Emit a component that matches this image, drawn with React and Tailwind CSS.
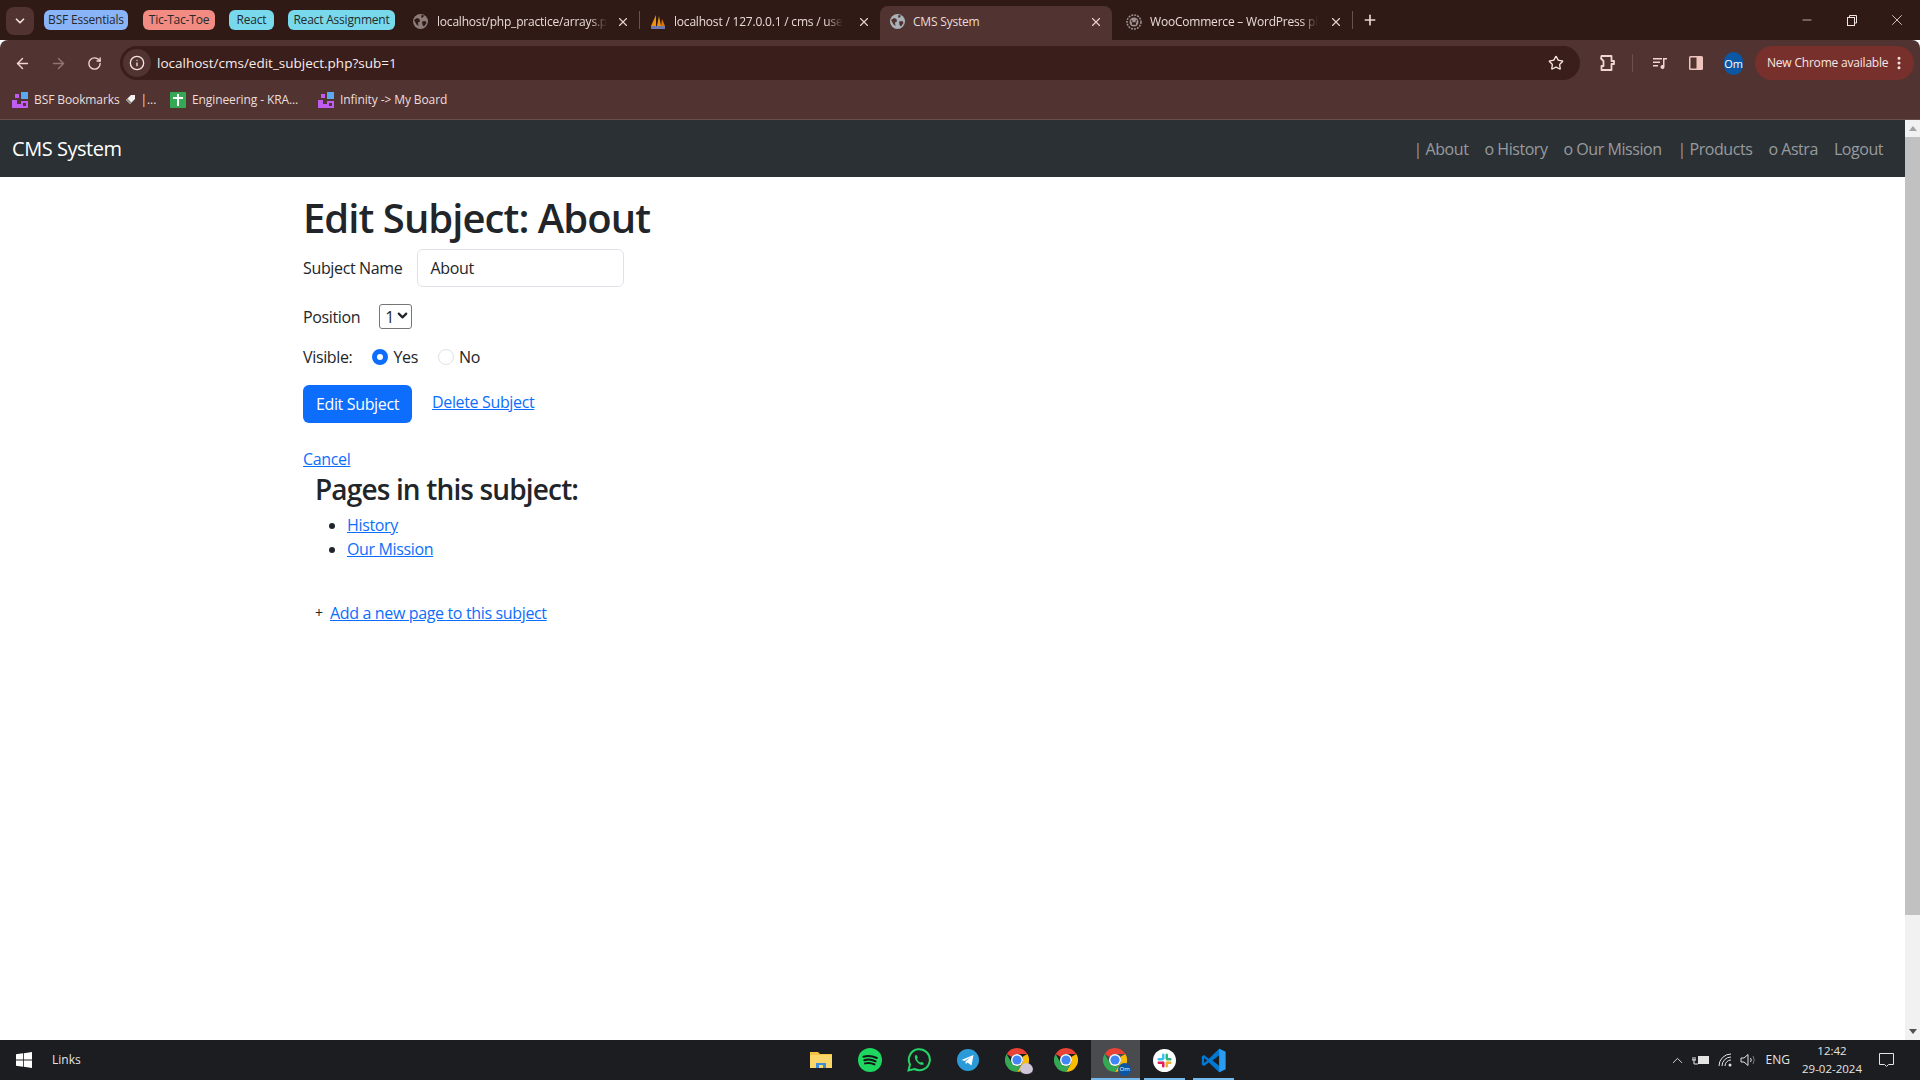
import { ArrowLeft, ArrowRight, RotateCw, Info, Star, ChevronDown, ChevronUp, X, Plus, Minus, MoreVertical } from "lucide-react";

const PILLS = [
  { label: "BSF Essentials", cls: "w-[84px] bg-[#8ab4f8] mr-[15px]" },
  { label: "Tic-Tac-Toe", cls: "w-[72px] bg-[#f28b82] mr-[14px]" },
  { label: "React", cls: "w-[45px] bg-[#78d9ec] mr-[14px]" },
  { label: "React Assignment", cls: "w-[107px] bg-[#78d9ec]" },
];

const NAV_LINKS = ["| About", "o History", "o Our Mission", "| Products", "o Astra", "Logout"];

function BoardIcon() {
  return (
    <svg width="16" height="16" viewBox="0 0 16 16" className="shrink-0">
      <rect x="0" y="8" width="5" height="8" fill="#c05cf2" />
      <rect x="5" y="12" width="4" height="4" fill="#c05cf2" />
      <rect x="3" y="2" width="4" height="4" fill="#c05cf2" />
      <rect x="9" y="0" width="7" height="7" fill="#5aa8f0" />
      <rect x="9" y="9" width="7" height="7" fill="#c05cf2" />
      <rect x="11" y="11" width="3" height="3" fill="#513432" />
    </svg>
  );
}

function SheetIcon() {
  return (
    <svg width="16" height="16" viewBox="0 0 16 16" className="shrink-0">
      <rect width="16" height="16" rx="1" fill="#34a853" />
      <rect x="3" y="5" width="10" height="2" fill="#fff" />
      <rect x="7" y="2" width="2" height="12" fill="#fff" />
    </svg>
  );
}

function PmaIcon() {
  return (
    <svg width="16" height="16" viewBox="0 0 16 16" className="shrink-0">
      <path d="M1 12 L6 1 L6 12 Z" fill="#f29111" />
      <path d="M7 12 L9 2 L11 12 Z" fill="#f29111" />
      <path d="M11 12 L12 5 L15 12 Z" fill="#d97a0a" />
      <rect x="1" y="12" width="14" height="3" fill="#6c78af" />
    </svg>
  );
}

function WpIcon() {
  return (
    <svg width="16" height="16" viewBox="0 0 16 16" className="shrink-0">
      <circle cx="8" cy="8" r="7" fill="none" stroke="#9c8f8d" strokeWidth="1.5" strokeDasharray="2 1" />
      <circle cx="8" cy="8" r="4.5" fill="#9c8f8d" />
      <path d="M5.5 6 L7 11 L8 8 L9 11 L10.5 6" fill="none" stroke="#301a16" strokeWidth="1" />
    </svg>
  );
}

// chrome's default favicon, a filled globe
function GlobeIcon({ color, bg }) {
  return (
    <svg width="15" height="15" viewBox="0 0 15 15" className="shrink-0">
      <circle cx="7.5" cy="7.5" r="7.5" fill={color} />
      <path d="M1 6 L4 4 L6.5 5 L7 7.5 L5 8.5 L5.5 12 L3.5 10.5 Z M8.5 1 L11 1.5 L10 3.5 L8 3.5 Z M9 7.5 L12.5 7 L13.5 9 L11 12.5 L9.5 11 Z" fill={bg} />
    </svg>
  );
}

function ChromeIcon({ badge }) {
  return (
    <div className="relative w-6 h-6">
      <svg width="24" height="24" viewBox="0 0 24 24">
        <path d="M12 0 A12 12 0 0 1 22.4 6 L12 6 A6 6 0 0 0 6.8 9 L1.6 6 A12 12 0 0 1 12 0 Z" fill="#ea4335" />
        <path d="M22.4 6 A12 12 0 0 1 12 24 L17.2 15 A6 6 0 0 0 17.2 9 Z" fill="#fbbc04" />
        <path d="M1.6 6 A12 12 0 0 0 12 24 L17.2 15 A6 6 0 0 1 6.8 15 Z" fill="#34a853" />
        <circle cx="12" cy="12" r="6" fill="#fff" />
        <circle cx="12" cy="12" r="4.6" fill="#4285f4" />
      </svg>
      {badge === "om" && (
        <span className="absolute -right-1 -bottom-1 w-[13px] h-[13px] rounded-full bg-[#0b57a4] text-white text-[6px] leading-[13px] text-center">Om</span>
      )}
      {badge === "pic" && (
        <span className="absolute -right-1 -bottom-1 w-[13px] h-[13px] rounded-full bg-[#cfc4d8] border-b-2 border-[#222]"></span>
      )}
    </div>
  );
}

function TabDivider() {
  return <span className="w-px h-[18px] bg-[#6b504d] shrink-0"></span>;
}

function Tab({ icon, title, active, widthCls, iconCls, textCls }) {
  return (
    <div className={`flex items-center shrink-0 h-[34px] pb-[3px] self-end ${widthCls} ${active ? "bg-[#513432] rounded-t-lg" : ""}`}>
      <span className={`w-4 flex justify-center ${iconCls}`}>{icon}</span>
      <span className={`whitespace-nowrap text-xs tracking-[-0.2px] text-[#e9dbd9] ${textCls}`}>{title}</span>
      <X size={14} strokeWidth={2} className="ml-auto mr-[9px] text-[#e9cfcb]" />
    </div>
  );
}

function TabStrip() {
  return (
    <div className="flex items-center h-10 bg-[#301a16] pl-[6px] shrink-0">
      <div className="w-7 h-[28px] rounded-lg bg-[#513432] flex items-center justify-center mr-[10px] mt-[2px]">
        <ChevronDown size={14} strokeWidth={3} className="text-[#f0dedb]" />
      </div>
      {PILLS.map((p) => (
        <span key={p.label} className={`h-5 rounded-md flex items-center justify-center text-xs tracking-[-0.2px] text-[#26292b] ${p.cls}`}>{p.label}</span>
      ))}
      <span className="ml-[7px]"><TabDivider /></span>
      <Tab widthCls="w-[237px]" iconCls="ml-[10px] mr-[9px]" textCls="[mask-image:linear-gradient(to_right,black_90%,transparent)]" title="localhost/php_practice/arrays.p" icon={<GlobeIcon color="#8d7c7a" bg="#301a16" />} />
      <TabDivider />
      <Tab widthCls="w-[240px]" iconCls="ml-[10px] mr-[8px]" textCls="[mask-image:linear-gradient(to_right,black_90%,transparent)]" title="localhost / 127.0.0.1 / cms / use" icon={<PmaIcon />} />
      <Tab active widthCls="w-[232px]" iconCls="ml-[9px] mr-[8px]" title="CMS System" icon={<GlobeIcon color="#aab1b8" bg="#513432" />} />
      <Tab widthCls="w-[240px]" iconCls="ml-[14px] mr-[8px]" textCls="[mask-image:linear-gradient(to_right,black_90%,transparent)]" title="WooCommerce – WordPress pl" icon={<WpIcon />} />
      <TabDivider />
      <Plus size={16} strokeWidth={2.5} className="ml-[9px] text-[#f0d5d0]" />
      <div className="ml-auto flex items-center text-[#f2e4e2]">
        <Minus size={14} strokeWidth={1.2} className="mr-[32px]" />
        <svg width="12" height="12" viewBox="0 0 12 12" className="mr-[30px]" fill="none" stroke="currentColor">
          <rect x="1.5" y="3.5" width="7" height="8" />
          <path d="M3.5 3.5 V1.5 H10.5 V9 H8.5" />
        </svg>
        <X size={18} strokeWidth={1.1} className="mr-[14px]" />
      </div>
    </div>
  );
}

function Toolbar() {
  return (
    <div className="flex items-center h-[46px] bg-[#513432] rounded-t-lg shrink-0 pl-[14px] pr-[6px] text-[#f0d5d0]">
      <ArrowLeft size={17} strokeWidth={2} className="mr-[19px]" />
      <ArrowRight size={17} strokeWidth={2} className="mr-[20px] text-[#94746f]" />
      <RotateCw size={15} strokeWidth={2.2} className="mr-[18px]" />
      <div className="flex items-center flex-1 h-[34px] rounded-full bg-[#3a1e1b]">
        <span className="ml-[3px] w-7 h-7 rounded-full bg-[#513432] flex items-center justify-center">
          <Info size={16} strokeWidth={2} className="text-[#f5e3e0]" />
        </span>
        <span className="ml-[6px] text-[13.5px] text-[#f8ecea]">localhost/cms/edit_subject.php?sub=1</span>
        <Star size={16} strokeWidth={2} className="ml-auto mr-4 text-[#f5e3e0]" />
      </div>
      <svg width="18" height="18" viewBox="0 0 18 18" className="ml-[18px]" fill="none" stroke="currentColor" strokeWidth="1.8" strokeLinejoin="round">
        <path d="M3.5 2 H13.5 V7 H16 V10 H13.5 V16 H3.5 V12 H5.5 V7 L3 4.5 Z" />
      </svg>
      <span className="w-px h-[18px] bg-[#6e4f4c] ml-[16px]"></span>
      <svg width="16" height="16" viewBox="0 0 16 16" className="ml-[19px]" fill="currentColor">
        <rect x="1" y="3" width="9" height="1.5" />
        <rect x="1" y="6.5" width="7" height="1.5" />
        <rect x="1" y="10" width="5" height="1.5" />
        <path d="M11 3 H15 V4.5 H12.5 V12 A2 2 0 1 1 11 10 Z" />
      </svg>
      <svg width="16" height="16" viewBox="0 0 16 16" className="ml-[20px]">
        <rect x="1" y="1" width="14" height="14" rx="1.5" fill="#eec4bd" />
        <rect x="2.5" y="2.5" width="6" height="11" fill="#513432" />
      </svg>
      <span className="ml-[20px] w-[19px] h-[23px] rounded-full bg-[#0b57a4] text-white text-[11px] leading-[23px] text-center">Om</span>
      <div className="ml-[12px] w-[159px] h-[34px] rounded-full bg-[#77302b] flex items-center pl-3 text-xs tracking-[-0.2px] whitespace-nowrap text-[#f8e6e3]">
        New Chrome available
        <MoreVertical size={16} strokeWidth={2.5} className="ml-auto mr-[7px]" />
      </div>
    </div>
  );
}

function Bookmark({ icon, cls, children }) {
  return (
    <div className={`flex items-center text-xs tracking-[-0.1px] text-[#ecdedc] ${cls}`}>
      <span className="mr-[6px]">{icon}</span>
      {children}
    </div>
  );
}

function BookmarksBar() {
  return (
    <div className="flex items-center h-[34px] pb-[6px] bg-[#513432] border-b border-[#665048] pl-3 shrink-0">
      <Bookmark icon={<BoardIcon />} cls="w-[158px]">
        <span>BSF Bookmarks</span>
        <svg width="11" height="11" viewBox="0 0 11 11" className="mx-[5px]">
          <path d="M1 6 L6 1 L10 1 L10 5 L5 10 Z" fill="#f4f0ef" />
          <path d="M1 6 L5 10 L6.5 8.5 L2.5 4.5 Z" fill="#8a8a8a" />
        </svg>
        <span>|...</span>
      </Bookmark>
      <Bookmark icon={<SheetIcon />} cls="w-[148px]"><span>Engineering - KRA...</span></Bookmark>
      <Bookmark icon={<BoardIcon />}><span>Infinity -&gt; My Board</span></Bookmark>
    </div>
  );
}

function Navbar() {
  return (
    <nav className="flex items-center h-[57px] pt-[1px] bg-[#2b3035] pl-3 pr-[22px] shrink-0">
      <span className="text-xl tracking-[-0.45px] text-white">CMS System</span>
      <div className="ml-auto flex gap-4 text-base tracking-[-0.45px] text-[#989b9e]">
        {NAV_LINKS.map((l) => (
          <span key={l}>{l}</span>
        ))}
      </div>
    </nav>
  );
}

function EditForm() {
  return (
    <div className="ml-[291px] w-[1320px] px-3 text-base tracking-[-0.35px] text-[#212529]">
      <h1 className="mt-[17px] text-[40px] leading-[48px] font-semibold tracking-[-0.95px]">Edit Subject: About</h1>
      <div className="mt-[7px] flex items-center">
        <label>Subject Name</label>
        <div className="ml-[15px] w-[207px] h-[38px] border border-[#dee2e6] rounded-md flex items-center px-3">About</div>
      </div>
      <div className="mt-[17px] flex items-center h-[25px]">
        <label>Position</label>
        <div className="relative ml-[19px]">
          <select defaultValue="1" className="appearance-none block w-[33px] h-[25px] pl-[5px] border border-[#767676] rounded-[3px] bg-white">
            <option value="1">1</option>
          </select>
          <ChevronDown size={15} strokeWidth={3.5} className="absolute right-[2px] top-[4px] pointer-events-none text-[#212529]" />
        </div>
      </div>
      <div className="mt-[16px] flex items-center h-6">
        <span>Visible:</span>
        <span className="ml-[20px] w-4 h-4 rounded-full border-[5px] border-[#0d6efd] bg-white"></span>
        <span className="ml-[5px]">Yes</span>
        <span className="ml-[20px] w-4 h-4 rounded-full border border-[#dee2e6] bg-white"></span>
        <span className="ml-[5px]">No</span>
      </div>
      <div className="mt-[16px] flex items-start">
        <button className="w-[109px] h-[38px] rounded-md bg-[#0d6efd] text-white">Edit Subject</button>
        <a className="ml-5 mt-[5px] text-[#0d6efd] underline" href="#delete">Delete Subject</a>
      </div>
      <div className="mt-[24px]">
        <a className="text-[#0d6efd] underline" href="#cancel">Cancel</a>
      </div>
      <div className="pl-3">
        <h3 className="mt-[1px] text-[28px] leading-[34px] font-semibold tracking-[-0.85px]">Pages in this subject:</h3>
        <ul className="mt-[7px] pl-8 list-disc">
          <li><a className="text-[#0d6efd] underline" href="#history">History</a></li>
          <li><a className="text-[#0d6efd] underline" href="#mission">Our Mission</a></li>
        </ul>
        <div className="mt-[40px] flex">
          <span className="w-[15px] text-sm leading-6">+</span>
          <a className="text-[#0d6efd] underline" href="#add">Add a new page to this subject</a>
        </div>
      </div>
    </div>
  );
}

function Scrollbar() {
  return (
    <div className="w-[15px] bg-[#f1f1f1] flex flex-col shrink-0">
      <div className="h-[17px] flex items-center justify-center">
        <span className="border-x-4 border-x-transparent border-b-[5px] border-b-[#a3a3a3]"></span>
      </div>
      <div className="h-[778px] bg-[#c1c1c1]"></div>
      <div className="mt-auto h-[17px] flex items-center justify-center">
        <span className="border-x-4 border-x-transparent border-t-[5px] border-t-[#505050]"></span>
      </div>
    </div>
  );
}

function Tray({ children, active, underline }) {
  return (
    <div className={`relative w-[49px] h-10 flex items-center justify-center ${active ? "bg-[#4a4b4e]" : ""}`}>
      {children}
      {underline && <span className={`absolute bottom-0 h-[2px] bg-[#76b9ed] ${active ? "inset-x-0" : "inset-x-1"}`}></span>}
    </div>
  );
}

function Taskbar() {
  return (
    <div className="relative flex items-center h-10 bg-[#1c1d20] shrink-0 text-[#e4e4e4]">
      <svg width="16" height="16" viewBox="0 0 16 16" className="ml-4" fill="#fff">
        <path d="M0 2.3 L7 1.3 V7.6 H0 Z M7.8 1.2 L16 0 V7.6 H7.8 Z M0 8.4 H7 V14.7 L0 13.7 Z M7.8 8.4 H16 V16 L7.8 14.8 Z" />
      </svg>
      <span className="ml-[20px] text-xs">Links</span>
      <div className="flex ml-[716px]">
        <Tray>
          <svg width="22" height="20" viewBox="0 0 22 20">
            <path d="M0 2 H8 L10 4 H22 V18 H0 Z" fill="#f5c242" />
            <rect x="0" y="5" width="22" height="13" fill="#fbd76b" />
            <path d="M6 18 V13 H16 V18 H13 V15 H9 V18 Z" fill="#3c8fd6" />
          </svg>
        </Tray>
        <Tray>
          <svg width="24" height="24" viewBox="0 0 24 24">
            <circle cx="12" cy="12" r="12" fill="#1ed760" />
            <path d="M5.5 8.7 Q12 6.8 18.8 10 M6.3 12.2 Q12 10.6 17.6 13.3 M7 15.4 Q12 14.2 16.5 16.4" fill="none" stroke="#141414" strokeWidth="2" strokeLinecap="round" />
          </svg>
        </Tray>
        <Tray>
          <svg width="24" height="24" viewBox="0 0 24 24">
            <path d="M1.5 22.5 L3 16.5 A10.5 10.5 0 1 1 7.5 21 Z" fill="none" stroke="#25d366" strokeWidth="2" />
            <path d="M8.5 7 C7 9 8 12 10.5 14.5 C13 17 15.5 17.5 17 16 L15 13.8 L13.5 14.5 C12 14 10.5 12.5 10 11 L10.8 9.5 L9.5 7 Z" fill="#25d366" />
          </svg>
        </Tray>
        <Tray>
          <svg width="22" height="22" viewBox="0 0 22 22">
            <circle cx="11" cy="11" r="11" fill="#2a9bd8" />
            <path d="M4.5 11 L16.5 6 L14.5 16.5 L10.5 13.5 L8.8 15 L8.5 12.5 L14 8 L7.5 12 Z" fill="#fff" />
          </svg>
        </Tray>
        <Tray><ChromeIcon badge="pic" /></Tray>
        <Tray><ChromeIcon /></Tray>
        <Tray active underline><ChromeIcon badge="om" /></Tray>
        <Tray underline>
          <svg width="23" height="23" viewBox="0 0 23 23">
            <circle cx="11.5" cy="11.5" r="11.5" fill="#fff" />
            <rect x="9" y="4.5" width="2.5" height="6" rx="1.2" fill="#36c5f0" />
            <rect x="4.5" y="9" width="6" height="2.5" rx="1.2" fill="#36c5f0" />
            <rect x="12.5" y="4.5" width="2.5" height="6" rx="1.2" fill="#2eb67d" />
            <rect x="13" y="9" width="5.5" height="2.5" rx="1.2" fill="#2eb67d" />
            <rect x="12.5" y="12.5" width="2.5" height="6" rx="1.2" fill="#ecb22e" />
            <rect x="13" y="12.5" width="5.5" height="2.5" rx="1.2" fill="#ecb22e" />
            <rect x="9" y="12.5" width="2.5" height="6" rx="1.2" fill="#e01e5a" />
            <rect x="4.5" y="12.5" width="6" height="2.5" rx="1.2" fill="#e01e5a" />
          </svg>
        </Tray>
        <Tray underline>
          <svg width="25" height="25" viewBox="0 0 24 24">
            <path d="M17.5 0.8 L23.5 3.5 V20.5 L17.5 23.2 L7.5 13.8 L3 17.3 L0.8 16 V8 L3 6.7 L7.5 10.2 Z" fill="#0078d4" />
            <path d="M17.5 7 L11 12 L17.5 17 Z" fill="#1c1d20" />
            <path d="M3 9.5 V14.5 L5.8 12 Z" fill="#1c1d20" />
            <path d="M17.5 0.8 L23.5 3.5 V20.5 L17.5 23.2 Z" fill="#2a9df0" />
          </svg>
        </Tray>
      </div>
      <div className="ml-auto flex items-center">
        <ChevronUp size={17} strokeWidth={1.3} className="mr-[6px]" />
        <svg width="18" height="14" viewBox="0 0 18 14" className="mr-[8px]" fill="none" stroke="currentColor">
          <rect x="6.5" y="3.5" width="10" height="7" fill="currentColor" />
          <path d="M0 7 H4 M1 4 V7 M3 4 V7 M2 7 V11 H6" />
        </svg>
        <svg width="16" height="14" viewBox="0 0 16 14" className="mr-[6px]" fill="none" stroke="currentColor">
          <path d="M1 13 A12 12 0 0 1 13 1 M4 13 A9 9 0 0 1 13 4 M7 13 A6 6 0 0 1 13 7" />
          <circle cx="12" cy="12" r="1.5" fill="currentColor" stroke="none" />
        </svg>
        <svg width="17" height="14" viewBox="0 0 17 14" className="mr-[9px]" fill="none" stroke="currentColor">
          <path d="M1 5 H4 L8 1.5 V12.5 L4 9 H1 Z" />
          <path d="M10.5 5 Q12 7 10.5 9" />
          <path d="M13 3 Q15.5 7 13 11" stroke="#777" />
        </svg>
        <span className="text-xs mr-[12px]">ENG</span>
        <div className="flex flex-col items-center text-[11.5px] leading-[18px] w-[60px] mr-[16px]">
          <span>12:42</span>
          <span>29-02-2024</span>
        </div>
        <svg width="17" height="16" viewBox="0 0 17 16" className="mr-[25px]" fill="none" stroke="currentColor">
          <path d="M1.5 1.5 H15.5 V12.5 H10.5 L8.5 14.5 L6.5 12.5 H1.5 Z" />
        </svg>
      </div>
    </div>
  );
}

export default function App() {
  return (
    <div className="flex flex-col h-screen overflow-hidden bg-white font-['Open_Sans','Noto_Sans',sans-serif]">
      <TabStrip />
      <Toolbar />
      <BookmarksBar />
      <div className="flex flex-1 min-h-0">
        <div className="flex-1 min-w-0">
          <Navbar />
          <EditForm />
        </div>
        <Scrollbar />
      </div>
      <Taskbar />
    </div>
  );
}
